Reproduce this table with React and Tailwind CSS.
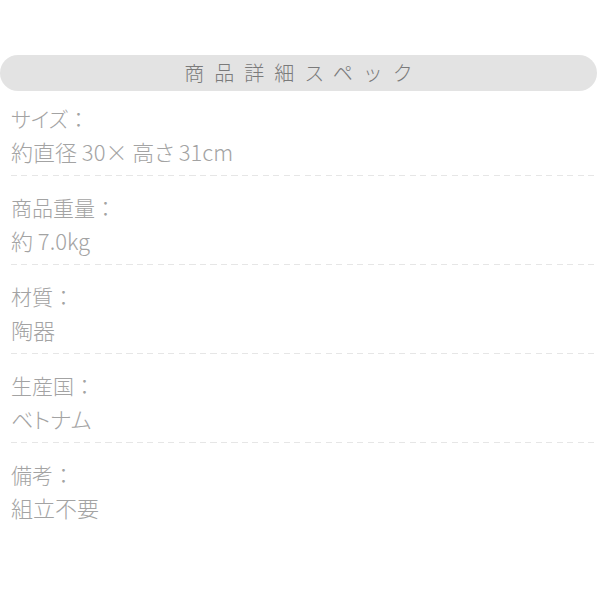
import React from "react";

const specs = [
  { label: "サイズ", value: "約直径 30× 高さ 31cm" },
  { label: "商品重量", value: "約 7.0kg" },
  { label: "材質", value: "陶器" },
  { label: "生産国", value: "ベトナム" },
  { label: "備考", value: "組立不要" },
];

const App = () => {
  return (
    <div
      className="w-[600px] h-[600px] bg-white pt-[55px]"
      style={{ fontFamily: '"Noto Sans CJK JP", "Noto Sans", sans-serif' }}
    >
      {/* Header */}
      <div className="mr-[3px] h-[36px] rounded-full bg-[#e3e3e3] flex items-center justify-center">
        <h2 className="text-[20px] leading-none tracking-[0.5em] pl-[0.5em] text-[#7a7a7a] font-light">
          商品詳細スペック
        </h2>
      </div>

      {/* Spec rows */}
      <div className="pl-[11px] pr-[6px] pt-[11px]">
        {specs.map((s, i) => (
          <div key={i}>
            <div className="text-[21px] leading-[33px] text-[#a3a3a3] font-light">
              <div>
                <span className="[font-feature-settings:'palt']">{s.label}</span>
                <span>：</span>
              </div>
              <div className="text-[22px] [font-feature-settings:'palt']">{s.value}</div>
            </div>
            {i < specs.length - 1 && (
              <div className="h-[1px] mt-[7px] mb-[15px] bg-[repeating-linear-gradient(to_right,#e6e6e6_0_6px,transparent_6px_10.5px)]" />
            )}
          </div>
        ))}
      </div>
    </div>
  );
};

export default App;
